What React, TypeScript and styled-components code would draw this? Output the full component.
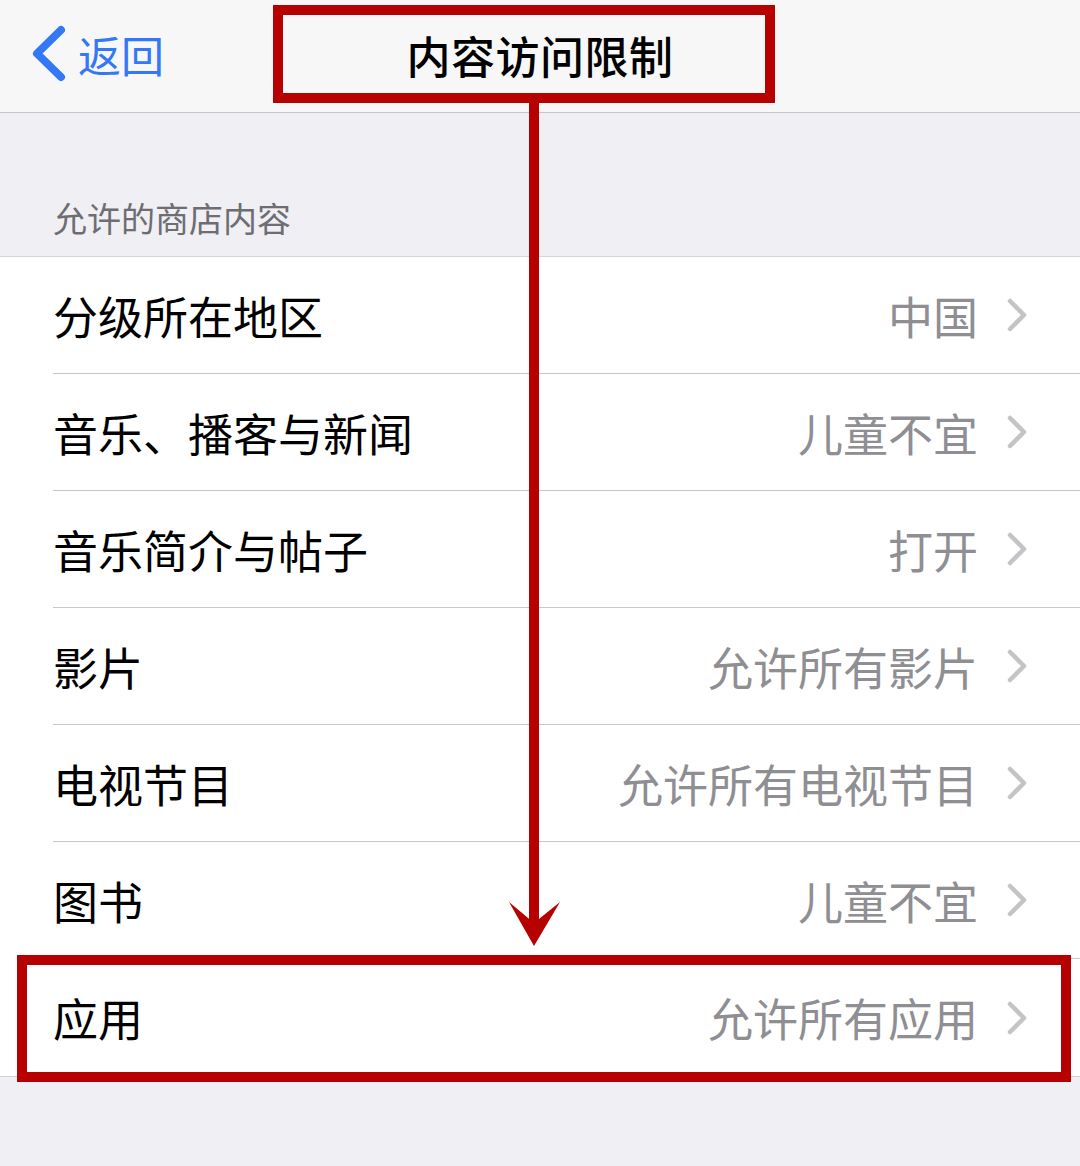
import React from "react";
import styled, { createGlobalStyle } from "styled-components";

const RED = "#b70000";

const GlobalStyle = createGlobalStyle`
  body {
    margin: 0;
    background: #efeff4;
    font-family: "Noto Sans CJK SC", "Noto Sans", sans-serif;
  }
`;

interface Item {
  label: string;
  value: string;
}

const items: Item[] = [
  { label: "分级所在地区", value: "中国" },
  { label: "音乐、播客与新闻", value: "儿童不宜" },
  { label: "音乐简介与帖子", value: "打开" },
  { label: "影片", value: "允许所有影片" },
  { label: "电视节目", value: "允许所有电视节目" },
  { label: "图书", value: "儿童不宜" },
  { label: "应用", value: "允许所有应用" },
];

const Page = styled.div`
  position: relative;
  width: 1080px;
  min-height: 1166px;
  background: #efeff4;
  overflow: hidden;
`;

const NavBar = styled.header`
  height: 112px;
  background: #f7f7f8;
  border-bottom: 1px solid #c6c6ca;
  display: grid;
  grid-template-columns: 1fr auto 1fr;
  align-items: center;
`;

const BackButton = styled.div`
  display: flex;
  align-items: center;
  gap: 9px;
  padding: 0 0 4px 29px;
  color: #3478f6;
  font-size: 43px;
  line-height: 1;
`;

const Title = styled.h1`
  margin: 0 0 2px;
  font-size: 44px;
  font-weight: 500;
  color: #000;
  letter-spacing: 0.5px;
`;

const SectionHeader = styled.div`
  height: 144px;
  display: flex;
  align-items: flex-end;
  padding: 0 0 18px 53px;
  box-sizing: border-box;
  font-size: 34px;
  line-height: 40px;
  color: #6d6d72;
  border-bottom: 1px solid #d4d4d8;
`;

const List = styled.ul`
  list-style: none;
  margin: 0;
  padding: 0;
  background: #fff;
  border-bottom: 1px solid #d4d4d8;
`;

const Row = styled.li`
  padding-left: 53px;
`;

const RowInner = styled.div<{ $last?: boolean }>`
  height: ${(p) => (p.$last ? 117 : 116)}px;
  display: flex;
  align-items: center;
  padding-right: 53px;
  border-bottom: ${(p) => (p.$last ? "none" : "1px solid #c8c7cc")};
`;

const Label = styled.span`
  flex: 1;
  font-size: 45px;
  color: #000;
`;

const Value = styled.span`
  font-size: 45px;
  color: #8e8e93;
  margin-right: 29px;
`;

const Frame = styled.div<{ $x: number; $y: number; $w: number; $h: number }>`
  position: absolute;
  left: ${(p) => p.$x}px;
  top: ${(p) => p.$y}px;
  width: ${(p) => p.$w}px;
  height: ${(p) => p.$h}px;
  border: 10px solid ${RED};
  box-sizing: border-box;
  pointer-events: none;
`;

const ArrowLayer = styled.svg`
  position: absolute;
  left: 0;
  top: 0;
  pointer-events: none;
`;

function BackChevron() {
  return (
    <svg width="40" height="64" viewBox="0 0 40 64">
      <polyline
        points="32,8 8,31.5 32,55"
        fill="none"
        stroke="#3478f6"
        strokeWidth="8"
        strokeLinecap="round"
        strokeLinejoin="round"
      />
    </svg>
  );
}

function Disclosure() {
  return (
    <svg width="20" height="34" viewBox="0 0 20 34">
      <polyline
        points="3,3 17,17 3,31"
        fill="none"
        stroke="#c4c4c7"
        strokeWidth="4.5"
        strokeLinecap="round"
        strokeLinejoin="round"
      />
    </svg>
  );
}

export default function App() {
  return (
    <Page>
      <GlobalStyle />
      <NavBar>
        <BackButton>
          <BackChevron />
          返回
        </BackButton>
        <Title>内容访问限制</Title>
        <div />
      </NavBar>
      <SectionHeader>允许的商店内容</SectionHeader>
      <List>
        {items.map((it, i) => (
          <Row key={it.label}>
            <RowInner $last={i === items.length - 1}>
              <Label>{it.label}</Label>
              <Value>{it.value}</Value>
              <Disclosure />
            </RowInner>
          </Row>
        ))}
      </List>

      <Frame $x={273} $y={5} $w={502} $h={98} />
      <ArrowLayer width="1080" height="1166">
        <rect x="529" y="100" width="10" height="826" fill={RED} />
        <polygon points="534,946 509,902 534,923 560,902" fill={RED} />
      </ArrowLayer>
      <Frame $x={17} $y={955} $w={1054} $h={127} />
    </Page>
  );
}
